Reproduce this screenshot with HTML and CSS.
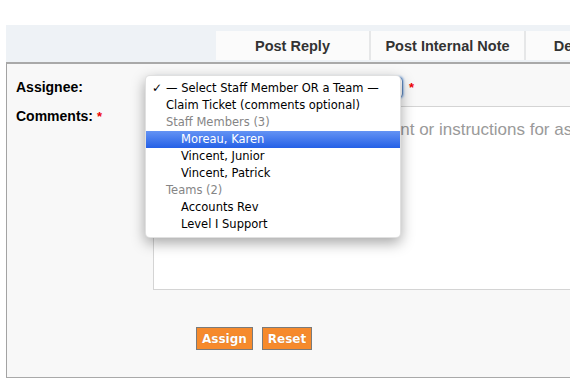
FILE: index.html
```html
<!DOCTYPE html>
<html lang="en">
<head>
    <meta charset="UTF-8">
    <title>Assign Ticket</title>
    <link rel="stylesheet" href="styles.css">
</head>
<body>
    <div class="page">
        <ul class="tabs">
            <li class="tab">Post Reply</li>
            <li class="tab">Post Internal Note</li>
            <li class="tab">Dept. Transfer</li>
        </ul>

        <div class="panel">
            <div class="row">
                <label class="label">Assignee:</label>
                <div class="field">
                    <div class="select"></div>
                    <span class="required">*</span>
                </div>
            </div>
            <div class="row row-top">
                <label class="label">Comments: <span class="required">*</span></label>
                <textarea class="comments" placeholder="Enter reasons for the assignment or instructions for assignee"></textarea>
            </div>
            <div class="actions">
                <button class="btn">Assign</button>
                <button class="btn">Reset</button>
            </div>

            <!-- open native select menu -->
            <ul class="menu">
                <li class="opt"><span class="check">✓</span>— Select Staff Member OR a Team —</li>
                <li class="opt">Claim Ticket (comments optional)</li>
                <li class="opt group">Staff Members (3)</li>
                <li class="opt sub active">Moreau, Karen</li>
                <li class="opt sub">Vincent, Junior</li>
                <li class="opt sub">Vincent, Patrick</li>
                <li class="opt group">Teams (2)</li>
                <li class="opt sub">Accounts Rev</li>
                <li class="opt sub">Level I Support</li>
            </ul>
        </div>
    </div>
</body>
</html>
```

FILE: styles.css
```css
* {
    margin: 0;
    padding: 0;
    box-sizing: border-box;
}

body {
    font-family: 'Liberation Sans', Arial, sans-serif;
    background: #fff;
    color: #000;
    overflow: hidden;
}

.page {
    padding: 25px 0 0 6px;
    width: 760px;
}

.tabs {
    list-style: none;
    display: flex;
    height: 37px;
    padding-left: 210px;
    background: #eef2f6;
}

.tab {
    width: 155px;
    height: 29px;
    margin-top: 6px;
    background: #fbfbfb;
    border-right: 2px solid #e6e7e8;
    text-align: center;
    font-size: 14.5px;
    font-weight: bold;
    color: #333;
    line-height: 30px;
}

.panel {
    position: relative;
    background: #f8f8f8;
    border-top: 2px solid #a9a9a9;
    border-left: 1px solid #a3a3a3;
    border-bottom: 1px solid #a9a9a9;
    padding: 12px 0 27px 9px;
}

.row {
    display: flex;
    align-items: center;
    height: 22px;
}

.row-top {
    align-items: flex-start;
    height: auto;
    margin-top: 8px;
}

.label {
    width: 137px;
    font-size: 14px;
    font-weight: bold;
    line-height: 16px;
}

.row-top .label {
    padding-top: 2px;
}

.required {
    color: #e00;
    font-weight: bold;
    font-size: 13px;
}

.field {
    display: flex;
    align-items: center;
    gap: 6px;
}

.select {
    width: 250px;
    height: 21px;
    background: #fff;
    border: 1px solid #5f88bd;
    border-radius: 4px;
    box-shadow: 0 0 2px 1px #9cbde6;
}

.comments {
    width: 600px;
    height: 184px;
    border: 1px solid #d4d4d4;
    background: #fff;
    padding: 13px 10px;
    font-family: 'Liberation Sans', Arial, sans-serif;
    font-size: 17px;
    resize: none;
}

.comments::placeholder {
    color: #9a9a9a;
}

.actions {
    display: flex;
    gap: 9px;
    margin-top: 37px;
    padding-left: 180px;
}

.btn {
    height: 23px;
    padding: 0 5px;
    background: #f68a2c;
    border: 1px solid #7a7a7a;
    color: #fff;
    font-family: 'DejaVu Sans', sans-serif;
    font-size: 12px;
    font-weight: bold;
    text-shadow: 0 0 1px rgba(120, 60, 0, 0.4);
}

.menu {
    list-style: none;
    position: absolute;
    left: 138px;
    top: 11px;
    width: 256px;
    padding: 4px 0;
    background: #fff;
    border: 1px solid rgba(0, 0, 0, 0.12);
    border-radius: 5px;
    box-shadow: 0 5px 14px rgba(0, 0, 0, 0.35);
    font-family: 'DejaVu Sans', sans-serif;
    font-size: 11.5px;
}

.opt {
    position: relative;
    height: 17px;
    line-height: 17px;
    padding-left: 20px;
    color: #000;
    white-space: nowrap;
}

.check {
    position: absolute;
    left: 6px;
    font-size: 12px;
    font-weight: bold;
}

.group {
    color: #858585;
}

.sub {
    padding-left: 35px;
}

.active {
    background: linear-gradient(#6493f4, #2460e6);
    color: #fff;
}
```
